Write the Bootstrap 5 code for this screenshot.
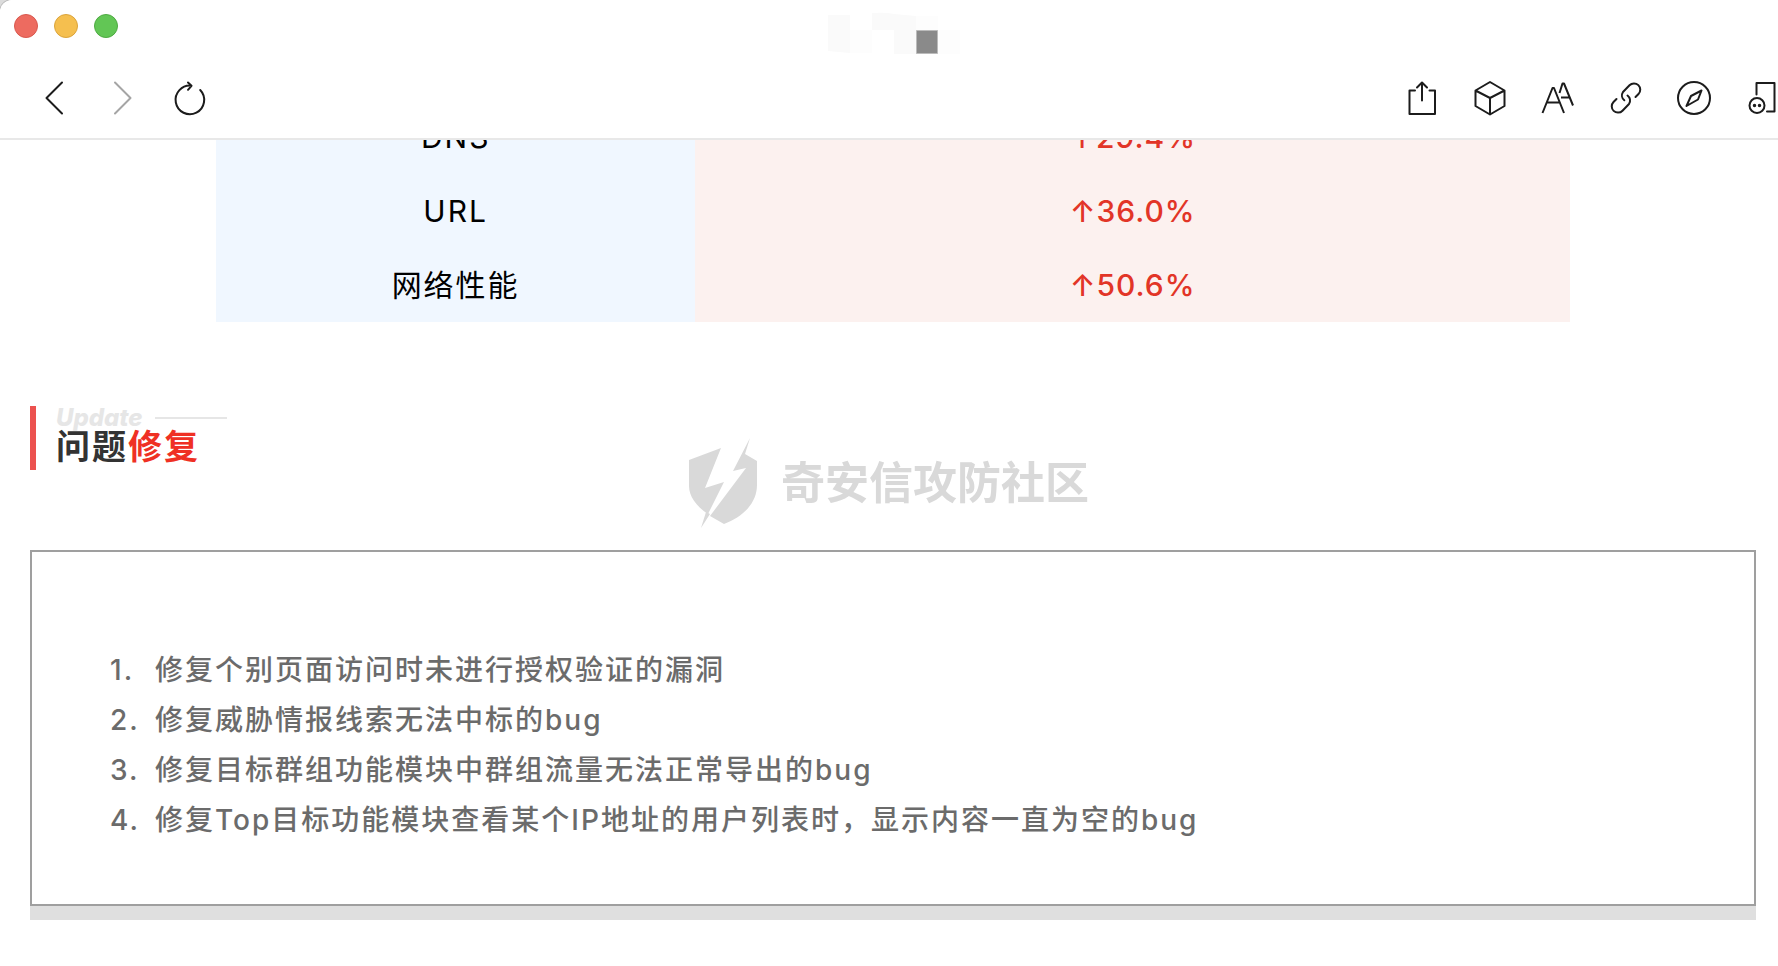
<!DOCTYPE html>
<html lang="zh-CN">
<head>
<meta charset="utf-8">
<meta name="viewport" content="width=device-width, initial-scale=1">
<title>问题修复</title>
<link rel="stylesheet" href="https://cdn.jsdelivr.net/npm/bootstrap@5.3.0/dist/css/bootstrap.min.css">
<style>
  html { background: #dcdcdc; }
  body { background: transparent; font-family: Inter, "Noto Sans CJK SC", sans-serif; }
  .window { background: #fff; min-height: 100vh; border-top-left-radius: 12px; box-shadow: 0 0 0 1px #bdbdbd; overflow: clip; }
  .window-head { background: #fff; border-bottom: 2px solid #e8e8e8; border-top-left-radius: 12px; }
  .title-bar { height: 58px; padding: 14px; }
  .light { width: 24px; height: 24px; border: 1px solid; padding: 0; border-radius: 50%; }
  .light-close { background: #ed6b60; border-color: #d9584e; }
  .light-min { background: #f5bf4f; border-color: #dba43b; }
  .light-max { background: #62c655; border-color: #4eaa42; }
  .tool-bar { height: 80px; padding-left: 38px; }
  .tool { display: block; padding: 0; border: 0; background: none; color: #1c1c1c; line-height: 0; }
  .tool:disabled { color: #a5a5a5; }
  .tool svg { width: 32px; height: 40px; overflow: visible; fill: none; stroke: currentColor; stroke-width: 2; stroke-linecap: round; stroke-linejoin: round; }
  .nav-tools { gap: 36px; }
  .page { padding: 0 22px 46px 30px; }
  .rates { width: 78.45%; margin-top: -40px; table-layout: fixed; text-align: center; font-size: 30px; line-height: 34px; letter-spacing: 2px; }
  .rates th, .rates td { padding: 20px 0; height: 74px; }
  .rates th { width: 35.4%; background: #f0f7ff; color: #000; font-weight: 400; }
  .rates td { background: #fcf1ef; color: #e23527; font-weight: 500; letter-spacing: 1px; }
  .section-title { margin-top: 84px; border-left: 6px solid #ec524f; padding-left: 20px; height: 64px; }
  .eyebrow { font-size: 24px; line-height: 24px; font-weight: 800; font-style: italic; color: #e6e6e6; gap: 12px; }
  .eyebrow::after { content: ""; width: 72px; height: 2px; background: #e6e6e6; }
  .section-title h2 { font-size: 34px; line-height: 34px; font-weight: 700; letter-spacing: 2px; color: #333; }
  .section-title em { font-style: normal; color: #ef3024; }
  .fixes { margin: 80px 0 14px; border: 2px solid #9f9f9f; box-shadow: 0 14px 0 #dfdfdf; padding: 93px 40px 59px 78px; }
  .fixes ol { padding-left: 45px; font-size: 28px; line-height: 50px; font-weight: 500; letter-spacing: 2px; color: #6b6b6b; list-style: none; counter-reset: fix; }
  .fixes li { counter-increment: fix; }
  .fixes li::before { content: counter(fix) "."; display: inline-block; width: 45px; margin-left: -45px; }
  .watermark { color: #d9d9d9; gap: 24px; pointer-events: none; z-index: 1; font-size: 44px; line-height: 44px; font-weight: 700; white-space: nowrap; }
</style>
</head>
<body>
<div class="window">
  <header class="window-head sticky-top">
    <div class="title-bar d-flex position-relative">
      <div class="d-flex gap-3">
        <button class="light light-close" aria-label="关闭"></button>
        <button class="light light-min" aria-label="最小化"></button>
        <button class="light light-max" aria-label="缩放"></button>
      </div>
      <svg class="position-absolute top-0 start-50 translate-middle-x" width="142" height="58" aria-hidden="true">
        <path fill="#fafafa" d="M10 15h22v38L10 51zM54 13q14-1 22 1l22 2v38H76V30H54z"/>
        <path fill="#fdfdfd" d="M32 30h22v23H32zM98 16h22v14H98zM120 30h22v24h-22z"/>
        <path fill="#8a8a8a" stroke="#bbb" d="M98.500 30.500h21v23h-21z"/>
      </svg>
    </div>
    <div class="tool-bar d-flex align-items-center justify-content-between">
      <div class="nav-tools d-flex">
        <button class="tool" aria-label="后退"><svg viewBox="0 0 32 40"><path d="M24 4.500 8.500 20 24 35.500"/></svg></button>
        <button class="tool" aria-label="前进" disabled><svg viewBox="0 0 32 40"><path d="M9 4.500 24.500 20 9 35.500"/></svg></button>
        <button class="tool" aria-label="刷新"><svg viewBox="0 0 32 40"><path d="M26.200 12A14.300 14.300 0 1 1 17.500 7.700M14 4.500l3.500 3.300-3.500 4"/></svg></button>
      </div>
      <div class="nav-tools d-flex">
        <button class="tool" aria-label="分享"><svg viewBox="0 0 32 40"><path d="M9 12.500H3.500V36h25.500V12.500H23.500M16 22.500V5M11 9.500 16 4.500l5 5"/></svg></button>
        <button class="tool" aria-label="模块"><svg viewBox="0 0 32 40"><path d="M16 4 30.500 12.500V28L16 36.500 1.500 28V12.500zM1.500 12.500 16 20l14.500-7.500M16 20v16.500"/></svg></button>
        <button class="tool" aria-label="字号"><svg viewBox="0 0 32 40"><path stroke-linecap="butt" d="M.500 35 10.500 10h1.500l10 25M4.500 24.500h14M17.500 15l3-9.500h1.500L31 27.500M19 19.500h8.500"/></svg></button>
        <button class="tool" aria-label="链接"><svg viewBox="0 0 32 40"><path d="M6.500 21 3.500 24a6.200 6.200 0 0 0 9 8.700l6.500-6.700a6.200 6.200 0 0 0-1.500-8.500M25.500 19l3-3a6.200 6.200 0 0 0-9-8.700L13 14a6.200 6.200 0 0 0 1.300 8.300"/></svg></button>
        <button class="tool" aria-label="浏览器"><svg viewBox="0 0 32 40"><circle cx="16" cy="20" r="16"/><path d="M23.500 12.500 20 21.500l-11.500 6.500L13 18z"/></svg></button>
        <button class="tool" aria-label="设备"><svg viewBox="0 0 32 40"><path d="M10.500 16.500V5h18v28.500H21"/><circle cx="11" cy="27.500" r="7.500"/><path stroke-width="3.500" d="M8.500 27.500h0M13.500 27.500h0"/></svg></button>
      </div>
    </div>
  </header>

  <main class="page">
    <table class="rates mx-auto">
      <tbody>
        <tr><th scope="row">DNS</th><td>↑29.4%</td></tr>
        <tr><th scope="row">URL</th><td>↑36.0%</td></tr>
        <tr><th scope="row">网络性能</th><td>↑50.6%</td></tr>
      </tbody>
    </table>

    <section>
      <div class="section-title">
        <div class="eyebrow d-flex align-items-center">Update</div>
        <h2 class="mb-0">问题<em>修复</em></h2>
      </div>
      <div class="fixes">
        <ol class="mb-0">
          <li>修复个别页面访问时未进行授权验证的漏洞</li>
          <li>修复威胁情报线索无法中标的bug</li>
          <li>修复目标群组功能模块中群组流量无法正常导出的bug</li>
          <li>修复Top目标功能模块查看某个IP地址的用户列表时，显示内容一直为空的bug</li>
        </ol>
      </div>
    </section>
  </main>
</div>

<div class="watermark position-fixed top-50 start-50 translate-middle d-flex align-items-center">
  <svg width="68" height="90" viewBox="0 0 68 90" fill="currentColor" aria-hidden="true">
    <path d="M0 22 32 10 16 50l19-6-16 32C7 68 0 58 0 48z"/>
    <path d="M61 0 56 16l12 7v24c0 18-14 32-33 39l-14-8 36-48-13 3zM17 74l-5 16 9-14z"/>
  </svg>
  <span>奇安信攻防社区</span>
</div>
<script src="https://cdn.jsdelivr.net/npm/bootstrap@5.3.0/dist/js/bootstrap.bundle.min.js"></script>
</body>
</html>
